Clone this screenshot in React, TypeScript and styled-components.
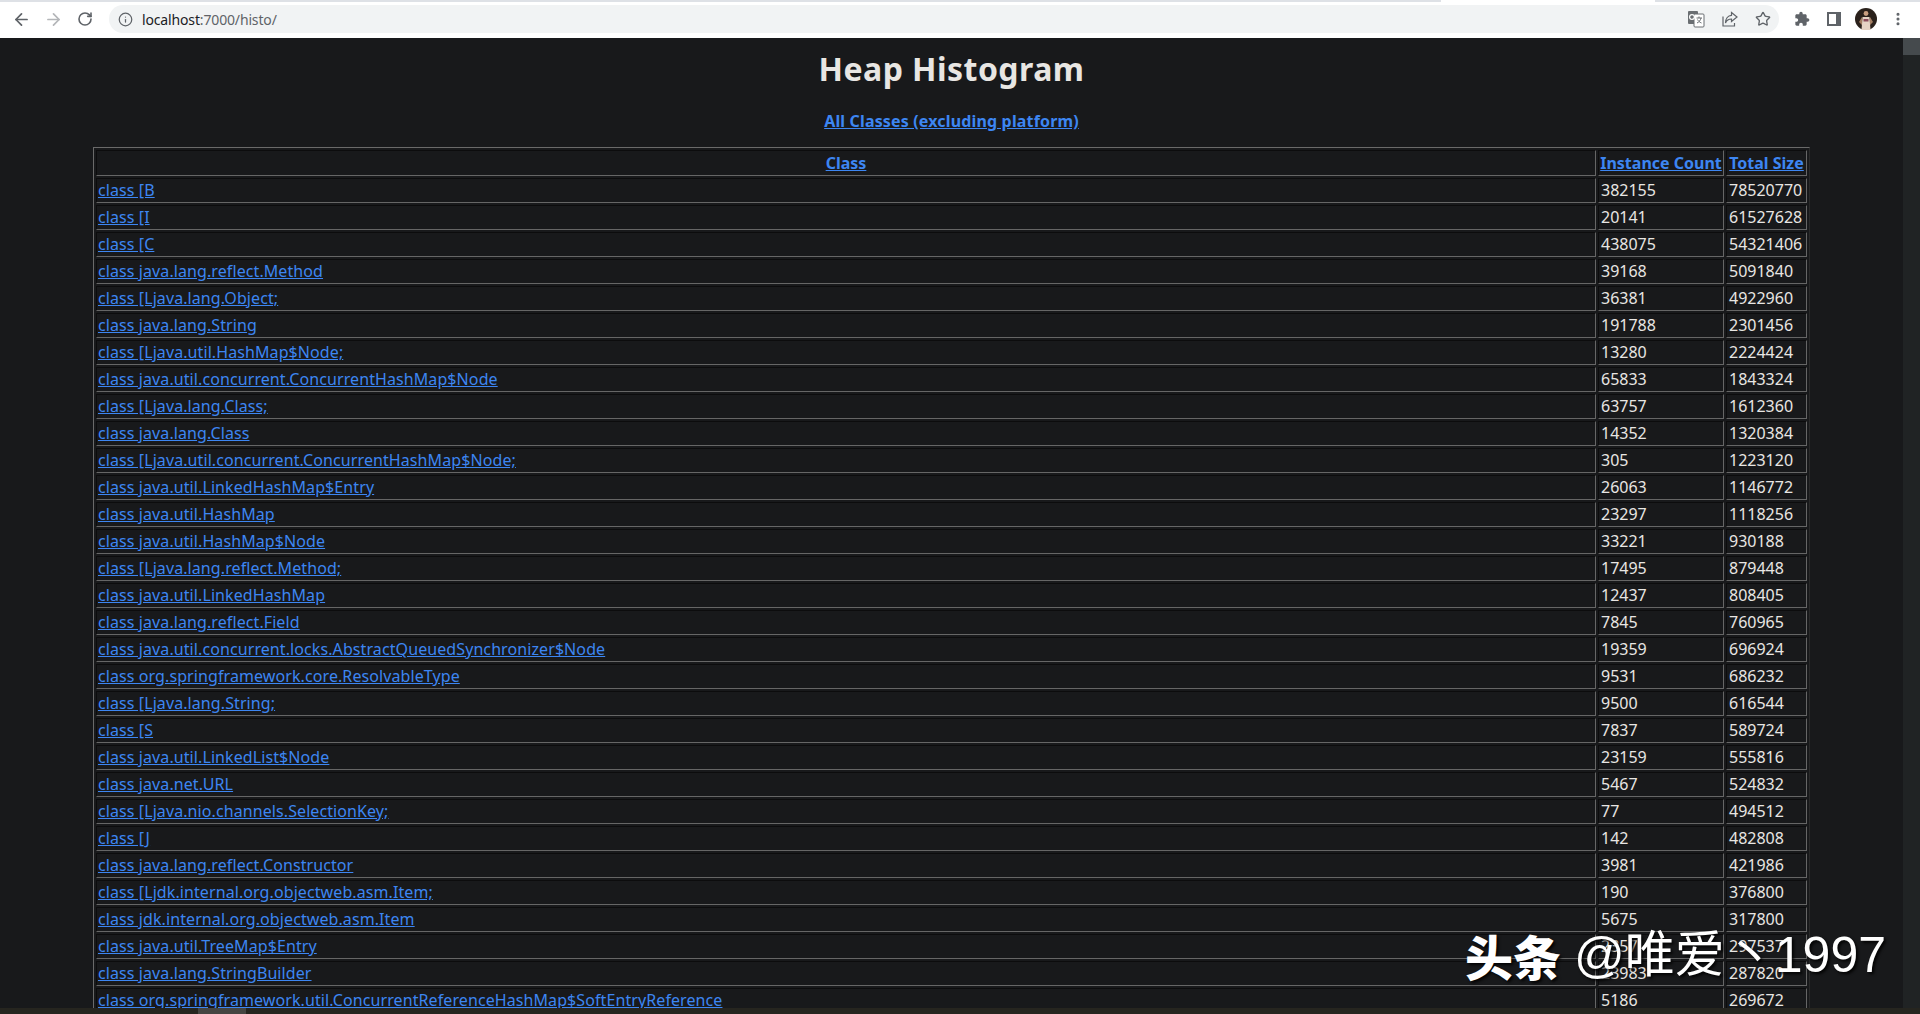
import React from "react";
import styled, { createGlobalStyle } from "styled-components";
import { ArrowLeft, ArrowRight, RotateCw, Info, Star, MoreVertical } from "lucide-react";

const GlobalStyle = createGlobalStyle`
  html, body {
    margin: 0;
    height: 100%;
    overflow: hidden;
    background: #18191b;
  }
`;

const rows: [string, string, string][] = [
  ["class [B", "382155", "78520770"],
  ["class [I", "20141", "61527628"],
  ["class [C", "438075", "54321406"],
  ["class java.lang.reflect.Method", "39168", "5091840"],
  ["class [Ljava.lang.Object;", "36381", "4922960"],
  ["class java.lang.String", "191788", "2301456"],
  ["class [Ljava.util.HashMap$Node;", "13280", "2224424"],
  ["class java.util.concurrent.ConcurrentHashMap$Node", "65833", "1843324"],
  ["class [Ljava.lang.Class;", "63757", "1612360"],
  ["class java.lang.Class", "14352", "1320384"],
  ["class [Ljava.util.concurrent.ConcurrentHashMap$Node;", "305", "1223120"],
  ["class java.util.LinkedHashMap$Entry", "26063", "1146772"],
  ["class java.util.HashMap", "23297", "1118256"],
  ["class java.util.HashMap$Node", "33221", "930188"],
  ["class [Ljava.lang.reflect.Method;", "17495", "879448"],
  ["class java.util.LinkedHashMap", "12437", "808405"],
  ["class java.lang.reflect.Field", "7845", "760965"],
  ["class java.util.concurrent.locks.AbstractQueuedSynchronizer$Node", "19359", "696924"],
  ["class org.springframework.core.ResolvableType", "9531", "686232"],
  ["class [Ljava.lang.String;", "9500", "616544"],
  ["class [S", "7837", "589724"],
  ["class java.util.LinkedList$Node", "23159", "555816"],
  ["class java.net.URL", "5467", "524832"],
  ["class [Ljava.nio.channels.SelectionKey;", "77", "494512"],
  ["class [J", "142", "482808"],
  ["class java.lang.reflect.Constructor", "3981", "421986"],
  ["class [Ljdk.internal.org.objectweb.asm.Item;", "190", "376800"],
  ["class jdk.internal.org.objectweb.asm.Item", "5675", "317800"],
  ["class java.util.TreeMap$Entry", "2357", "297537"],
  ["class java.lang.StringBuilder", "23983", "287820"],
  ["class org.springframework.util.ConcurrentReferenceHashMap$SoftEntryReference", "5186", "269672"],
];

const Screen = styled.div`
  position: relative;
  height: 100vh;
  display: flex;
  flex-direction: column;
  overflow: hidden;
  font-family: "Noto Sans", "Open Sans", sans-serif;
`;

const TabEdge = styled.div`
  height: 2px;
  background: linear-gradient(to right, #dee1e6 1441px, #fff 1441px, #fff 1655px, #dee1e6 1655px);
`;

const Toolbar = styled.div`
  height: 36px;
  box-sizing: border-box;
  background: #fff;
  display: flex;
  align-items: center;
  padding: 0 6px 2px 5px;
`;

const NavButton = styled.span<{ $dim?: boolean }>`
  width: 32px;
  display: flex;
  justify-content: center;
  color: ${(p) => (p.$dim ? "#b4b6b9" : "#5f6368")};
`;

const Omnibox = styled.div`
  margin-left: 8px;
  flex: 1;
  height: 28px;
  border-radius: 14px;
  background: #f1f3f4;
  display: flex;
  align-items: center;
  padding: 0 8px 0 9px;
  color: #5f6368;
`;

const Url = styled.span`
  margin-left: 9px;
  flex: 1;
  font-size: 14px;
  letter-spacing: -0.15px;
  color: #5f6368;
  b {
    font-weight: 400;
    color: #202124;
  }
`;

const OmniIcon = styled.span`
  margin-left: 16px;
  display: flex;
  color: #5f6368;
`;

const ToolIcon = styled.span<{ $first?: boolean }>`
  width: 32px;
  margin-left: ${(p) => (p.$first ? 7 : 0)}px;
  display: flex;
  justify-content: center;
  align-items: center;
  color: #5f6368;
`;

const Viewport = styled.div`
  flex: 1;
  min-height: 0;
  display: flex;
`;

const Page = styled.div`
  flex: 1;
  min-width: 0;
  overflow: hidden;
  color: #e8e6e3;
  background: #18191b;
  text-align: center;
`;

const Title = styled.h1`
  margin: 0;
  padding-top: 9px;
  font-size: 32px;
  line-height: 43px;
  font-weight: 700;
  letter-spacing: 0.45px;
  color: #e8e6e3;
`;

const Lead = styled.h3`
  margin: 21px 0 15px;
  font-size: 16px;
  line-height: 21px;
  font-weight: 700;
  letter-spacing: 0.16px;
`;

const Anchor = styled.a`
  color: #3d86f2;
  text-decoration: underline;
`;

const Table = styled.table`
  width: 1714px;
  margin: 0 auto;
  table-layout: fixed;
  border-collapse: separate;
  border-spacing: 2px;
  border: 1px solid;
  border-color: #6a6a6a #2a2a2a #2a2a2a #6a6a6a;
  font-size: 16px;
  line-height: 21px;
  text-align: left;
`;

const Col = styled.col<{ $w: number }>`
  width: ${(p) => p.$w}px;
`;

const Head = styled.th`
  padding: 2px 1px 1px;
  border: 1px solid;
  border-color: #0c0c0d #666 #666 #0c0c0d;
  text-align: center;
  white-space: nowrap;
  font-weight: 700;
`;

const Cell = styled.td`
  padding: 1px 1px 1px 2px;
  border: 1px solid;
  border-color: #0c0c0d #666 #666 #0c0c0d;
  white-space: nowrap;
  overflow: hidden;
`;

const ClassCell = styled(Cell)`
  padding-left: 1px;
`;

const ClassLink = styled(Anchor)`
  letter-spacing: 0.09px;
`;

const VScroll = styled.div`
  width: 17px;
  background: #202324;
`;

const VThumb = styled.div`
  height: 17px;
  background: #454a4d;
`;

const HScroll = styled.div`
  height: 6px;
  background: #26251f;
  padding-left: 198px;
`;

const HThumb = styled.div`
  width: 48px;
  height: 100%;
  background: #454542;
`;

const Watermark = styled.div`
  position: absolute;
  left: 1465px;
  top: 925px;
  display: flex;
  align-items: center;
  gap: 13px;
  color: #fff;
  white-space: nowrap;
  text-shadow: 2px 2px 3px rgba(0, 0, 0, 0.9);
  font-size: 50px;
  line-height: 60px;
`;

const Brand = styled.span`
  font-family: "Noto Sans CJK SC", sans-serif;
  font-weight: 900;
  font-size: 48px;
`;

const Handle = styled.span`
  font-family: "Liberation Sans", "Noto Sans CJK SC", sans-serif;
  font-weight: 400;
`;

function TranslateIcon() {
  return (
    <svg width="18" height="18" viewBox="0 0 18 18">
      <rect x="1" y="1" width="10" height="13" rx="1" fill="#6a6e72" />
      <rect x="7" y="4" width="10" height="13" rx="1" fill="#fff" stroke="#6a6e72" />
      <circle cx="5" cy="7" r="2.4" fill="none" stroke="#fff" strokeWidth="1.2" />
      <path d="M9.5 8h5.5M12 6.5V8M14 8c-.5 2.5-2 4-4 5M10.5 9.5c.8 1.5 2 2.7 4 3.5" fill="none" stroke="#6a6e72" strokeWidth="1" />
    </svg>
  );
}

function ShareIcon() {
  return (
    <svg width="18" height="18" viewBox="0 0 18 18" fill="none" stroke="#5f6368" strokeWidth="1.2">
      <path d="M2 6.5V16h11.5v-3" />
      <path d="M10.5 2.5L16 7l-5.5 4.5V9C7.5 9 5.5 10.5 4.5 13c0-4.5 2.5-7.5 6-7.7z" />
    </svg>
  );
}

function PuzzleIcon() {
  return (
    <svg width="16" height="16" viewBox="0 0 24 24" fill="#5f6368">
      <path d="M20.5 11H19V7c0-1.1-.9-2-2-2h-4V3.5C13 2.12 11.88 1 10.5 1S8 2.12 8 3.5V5H4c-1.1 0-1.99.9-1.99 2v3.8H3.5c1.49 0 2.7 1.21 2.7 2.7s-1.21 2.7-2.7 2.7H2V20c0 1.1.9 2 2 2h3.8v-1.5c0-1.49 1.21-2.7 2.7-2.7 1.49 0 2.7 1.21 2.7 2.7V22H17c1.1 0 2-.9 2-2v-4h1.5c1.38 0 2.5-1.12 2.5-2.5S21.88 11 20.5 11z" />
    </svg>
  );
}

function SidePanelIcon() {
  return (
    <svg width="16" height="16" viewBox="0 0 16 16">
      <path d="M1 1h14v14H1z M3 3v10h7V3z" fill="#5f6368" fillRule="evenodd" />
    </svg>
  );
}

function AvatarIcon() {
  return (
    <svg width="22" height="22" viewBox="0 0 22 22">
      <circle cx="11" cy="11" r="11" fill="#2a211b" />
      <circle cx="11" cy="5.5" r="2.4" fill="#c99f80" />
      <path d="M7.5 9h7l1 13h-9z" fill="#e6d3c4" />
      <path d="M8.5 11h5v2.5h-5z" fill="#8a4a5a" />
      <path d="M4 14l3-5v8zM18 14l-3-5v8z" fill="#a57f63" />
    </svg>
  );
}

export default function App() {
  return (
    <Screen>
      <GlobalStyle />
      <TabEdge />
      <Toolbar>
        <NavButton><ArrowLeft size={19} strokeWidth={2.2} /></NavButton>
        <NavButton $dim><ArrowRight size={19} strokeWidth={2.2} /></NavButton>
        <NavButton><RotateCw size={16} strokeWidth={2.4} /></NavButton>
        <Omnibox>
          <Info size={15} />
          <Url><b>localhost</b>:7000/histo/</Url>
          <OmniIcon><TranslateIcon /></OmniIcon>
          <OmniIcon><ShareIcon /></OmniIcon>
          <OmniIcon><Star size={16} strokeWidth={2} /></OmniIcon>
        </Omnibox>
        <ToolIcon $first><PuzzleIcon /></ToolIcon>
        <ToolIcon><SidePanelIcon /></ToolIcon>
        <ToolIcon><AvatarIcon /></ToolIcon>
        <ToolIcon><MoreVertical size={16} strokeWidth={2.6} /></ToolIcon>
      </Toolbar>
      <Viewport>
        <Page>
          <Title>Heap Histogram</Title>
          <Lead><Anchor href="#">All Classes (excluding platform)</Anchor></Lead>
          <Table>
            <colgroup>
              <Col $w={1500} />
              <Col $w={126} />
              <Col $w={81} />
            </colgroup>
            <thead>
              <tr>
                <Head><Anchor href="#">Class</Anchor></Head>
                <Head><Anchor href="#">Instance Count</Anchor></Head>
                <Head><Anchor href="#">Total Size</Anchor></Head>
              </tr>
            </thead>
            <tbody>
              {rows.map(([name, count, size]) => (
                <tr key={name}>
                  <ClassCell><ClassLink href="#">{name}</ClassLink></ClassCell>
                  <Cell>{count}</Cell>
                  <Cell>{size}</Cell>
                </tr>
              ))}
            </tbody>
          </Table>
        </Page>
        <VScroll><VThumb /></VScroll>
      </Viewport>
      <HScroll><HThumb /></HScroll>
      <Watermark>
        <Brand>头条</Brand>
        <Handle>@唯爱丶1997</Handle>
      </Watermark>
    </Screen>
  );
}
